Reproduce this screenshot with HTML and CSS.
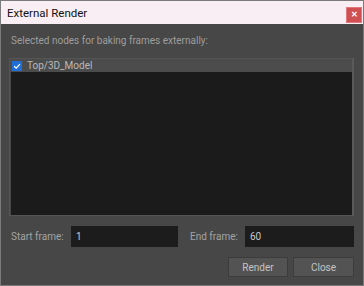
FILE: index.html
```html
<!DOCTYPE html>
<html lang="en">
<head>
    <meta charset="UTF-8">
    <title>External Render</title>
    <link rel="stylesheet" href="styles.css">
</head>
<body>
    <div class="window">
        <div class="title-bar">
            <span class="title">External Render</span>
            <div class="close-x">&#x2715;</div>
        </div>
        <div class="content">
            <div class="caption">Selected nodes for baking frames externally:</div>
            <div class="node-list">
                <div class="node-row">
                    <span class="check">
                        <svg width="10" height="10" viewBox="0 0 10 10"><path d="M2.2 5.2 L4.2 7.1 L7.9 3.1" fill="none" stroke="#fff" stroke-width="1.3"/></svg>
                    </span>
                    <span class="node-name">Top/3D_Model</span>
                </div>
                <div class="list-body"></div>
            </div>
            <div class="frames">
                <span class="label">Start frame:</span>
                <div class="field">1</div>
                <span class="label end">End frame:</span>
                <div class="field">60</div>
            </div>
            <div class="buttons">
                <div class="btn">Render</div>
                <div class="btn">Close</div>
            </div>
        </div>
    </div>
</body>
</html>
```

FILE: styles.css
```css
body, html {
    margin: 0;
    padding: 0;
    background: #474747;
}
.window {
    width: 364px;
    height: 286px;
    box-sizing: border-box;
    border: 1px solid #7a7a7a;
    background: #474747;
    display: flex;
    flex-direction: column;
    font-family: Roboto, sans-serif;
}
.title-bar {
    height: 23px;
    background: #f9eef3;
    display: flex;
    align-items: center;
    justify-content: space-between;
    padding: 0 1px 0 6px;
}
.title {
    font-size: 11.5px;
    color: #111;
}
.close-x {
    width: 16px;
    height: 16px;
    background: #cf4f52;
    border: 1px solid #e07a7d;
    box-sizing: border-box;
    color: #fff;
    font-size: 8px;
    font-weight: bold;
    display: flex;
    align-items: center;
    justify-content: center;
    margin-top: 4px;
}
.content {
    flex: 1;
    display: flex;
    flex-direction: column;
    padding: 0 9px 0 8px;
}
.caption {
    font-size: 10px;
    color: #9e9e9e;
    height: 34px;
    line-height: 34px;
    padding-left: 2px;
}
.node-list {
    height: 156px;
    border: 1px solid #555;
    border-right: 2px solid #5a5a5a;
    display: flex;
    flex-direction: column;
}
.node-row {
    height: 13px;
    background: #4c4c4c;
    display: flex;
    align-items: center;
    padding: 0 2px;
    gap: 5px;
}
.check {
    width: 10px;
    height: 10px;
    background: #1f6fd6;
    display: flex;
}
.node-name {
    font-size: 10px;
    color: #b9b9b9;
}
.list-body {
    flex: 1;
    background: #1b1b1b;
    margin-left: 1px;
}
.frames {
    display: flex;
    align-items: center;
    margin-top: 10px;
    height: 21px;
}
.label {
    font-size: 10px;
    color: #a3a3a3;
    width: 60px;
    padding-left: 2px;
}
.label.end {
    width: 55px;
    margin-left: 10px;
}
.field {
    width: 107px;
    height: 21px;
    box-sizing: border-box;
    background: #1c1c1c;
    color: #c8c8c8;
    font-size: 10px;
    line-height: 21px;
    padding-left: 5px;
}
.field:last-child {
    width: 109px;
}
.buttons {
    display: flex;
    justify-content: flex-end;
    gap: 5px;
    margin-top: 10px;
}
.btn {
    width: 60px;
    height: 20px;
    box-sizing: border-box;
    background: #535353;
    border: 1px solid #3c3c3c;
    color: #c4c4c4;
    font-size: 10px;
    display: flex;
    align-items: center;
    justify-content: center;
}
.btn:last-child {
    width: 61px;
}
```
